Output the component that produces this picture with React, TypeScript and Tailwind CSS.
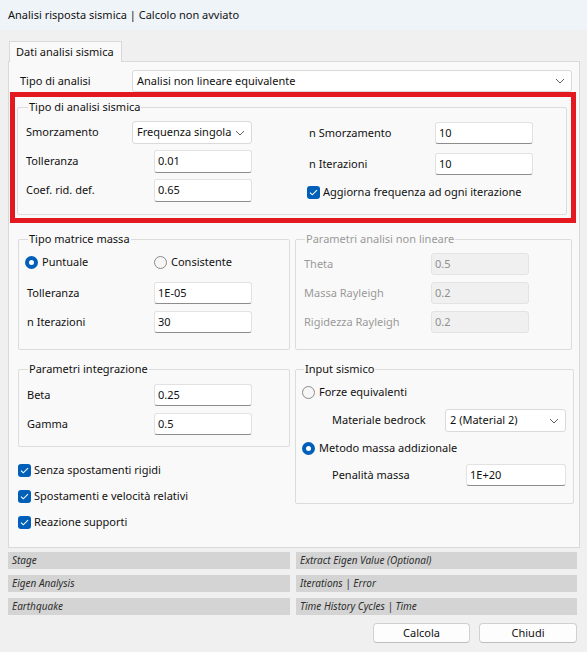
import React from "react";

const Chevron = () => (
  <svg width="10" height="6" viewBox="0 0 10 6" className="shrink-0">
    <path d="M1 1 L5 5 L9 1" fill="none" stroke="#5f5f5f" strokeWidth="1" />
  </svg>
);

const Check = () => (
  <span className="w-[13px] h-[13px] rounded-[3px] bg-[#005fb8] flex items-center justify-center shrink-0">
    <svg width="9" height="7" viewBox="0 0 9 7">
      <path d="M1 3.6 L3.3 5.8 L8 1.2" fill="none" stroke="#fff" strokeWidth="1.1" />
    </svg>
  </span>
);

const Radio: React.FC<{ on?: boolean }> = ({ on }) =>
  on ? (
    <span className="w-[13px] h-[13px] rounded-full bg-[#005fb8] flex items-center justify-center shrink-0">
      <span className="w-[5px] h-[5px] rounded-full bg-white" />
    </span>
  ) : (
    <span className="w-[13px] h-[13px] rounded-full border border-[#8a8a8a] bg-[#f6f6f6] shrink-0" />
  );

const Field: React.FC<{ value: string; w: string; h?: string; disabled?: boolean }> = ({
  value,
  w,
  h = "h-[22px]",
  disabled,
}) => (
  <div
    className={`${w} ${h} rounded-[3px] border pl-[3px] pt-[1px] leading-[18px] shrink-0 ${
      disabled
        ? "bg-[#f0f0f0] border-[#e3e3e3] text-[#8f8f8f]"
        : "bg-white border-[#e2e2e2] border-b-[#8d8d8d] text-[#111]"
    }`}
  >
    {value}
  </div>
);

const Combo: React.FC<{ value: string; w: string; h?: string }> = ({ value, w, h = "h-[23px]" }) => (
  <div
    className={`${w} ${h} rounded-[3px] border border-[#dadada] bg-white pl-[4px] pr-[6px] flex items-center justify-between gap-[4px] shrink-0`}
  >
    <span>{value}</span>
    <Chevron />
  </div>
);

const Group: React.FC<{ title: string; className?: string; disabled?: boolean; children: React.ReactNode }> = ({
  title,
  className = "",
  disabled,
  children,
}) => (
  <fieldset className={`border border-[#dcdcdc] rounded-[2px] px-[7px] ${className}`}>
    <legend className={`ml-[2px] px-[1px] leading-[16px] ${disabled ? "text-[#9a9a9a]" : ""}`}>{title}</legend>
    {children}
  </fieldset>
);

const Row: React.FC<{ label: string; lw: string; children: React.ReactNode; muted?: boolean }> = ({
  label,
  lw,
  children,
  muted,
}) => (
  <div className="flex items-center">
    <span className={`${lw} shrink-0 ${muted ? "text-[#9a9a9a]" : ""}`}>{label}</span>
    {children}
  </div>
);

const Status: React.FC<{ text: string }> = ({ text }) => (
  <div className="h-[17px] bg-[#d4d4d4] pl-[4px] text-[10px] italic leading-[17px] text-[#2e2e2e]">{text}</div>
);

export default function App() {
  return (
    <div
      className="w-[587px] h-[652px] bg-[#f0f0f0] text-[11px] text-[#111] overflow-hidden whitespace-nowrap"
      style={{ fontFamily: '"Noto Sans", "Open Sans", sans-serif' }}
    >
      <div className="h-[30px] bg-[#eff4f9] pl-[8px] flex items-center">Analisi risposta sismica | Calcolo non avviato</div>

      <div className="px-[8px] pt-[11px]">
        <div className="ml-[1px] w-[113px] h-[21px] border border-b-0 border-[#d9d9d9] bg-[#f9f9f9] pl-[6px] leading-[20px] relative z-10">
          Dati analisi sismica
        </div>

        <div className="-mt-px w-[572px] h-[487px] border border-[#d9d9d9] bg-[#f9f9f9] pt-[8px]">
          <div className="flex items-center pl-[11px]">
            <span className="w-[112px]">Tipo di analisi</span>
            <Combo value="Analisi non lineare equivalente" w="w-[440px]" h="h-[22px]" />
          </div>

          {/* highlighted block */}
          <div className="ml-px w-[566px] border-[5px] border-[#e3191f] pt-[2px] pl-[2px] pr-[4px] pb-[3px]">
            <Group title="Tipo di analisi sismica" className="pb-[12px] pl-[8px]">
              <div className="flex pt-[6px]">
                <div className="w-[283px] flex flex-col gap-[6px]">
                  <Row label="Smorzamento" lw="w-[106px]">
                    <Combo value="Frequenza singola" w="w-[120px]" />
                  </Row>
                  <Row label="Tolleranza" lw="w-[128px]">
                    <Field value="0.01" w="w-[98px]" h="h-[23px]" />
                  </Row>
                  <Row label="Coef. rid. def." lw="w-[128px]">
                    <Field value="0.65" w="w-[98px]" h="h-[23px]" />
                  </Row>
                </div>
                <div className="flex flex-col gap-[9px] pt-[1px]">
                  <Row label="n Smorzamento" lw="w-[126px]">
                    <Field value="10" w="w-[98px]" />
                  </Row>
                  <Row label="n Iterazioni" lw="w-[126px]">
                    <Field value="10" w="w-[98px]" />
                  </Row>
                  <div className="flex items-center gap-[3px] -ml-[2px] h-[16px]">
                    <Check />
                    <span>Aggiorna frequenza ad ogni iterazione</span>
                  </div>
                </div>
              </div>
            </Group>
          </div>

          <div className="flex gap-[5px] pl-[9px] pt-[8px] items-stretch">
            <Group title="Tipo matrice massa" className="w-[272px] pb-[16px]">
              <div className="flex items-center h-[16px] mt-[7px] -ml-[1px]">
                <span className="flex items-center gap-[4px] w-[129px]">
                  <Radio on />
                  Puntuale
                </span>
                <span className="flex items-center gap-[4px]">
                  <Radio />
                  Consistente
                </span>
              </div>
              <div className="flex flex-col gap-[7px] mt-[12px] ml-[1px]">
                <Row label="Tolleranza" lw="w-[127px]">
                  <Field value="1E-05" w="w-[98px]" />
                </Row>
                <Row label="n Iterazioni" lw="w-[127px]">
                  <Field value="30" w="w-[98px]" />
                </Row>
              </div>
            </Group>

            <Group title="Parametri analisi non lineare" className="w-[277px]" disabled>
              <div className="flex flex-col gap-[7px] mt-[6px] ml-[1px]">
                <Row label="Theta" lw="w-[127px]" muted>
                  <Field value="0.5" w="w-[98px]" disabled />
                </Row>
                <Row label="Massa Rayleigh" lw="w-[127px]" muted>
                  <Field value="0.2" w="w-[98px]" disabled />
                </Row>
                <Row label="Rigidezza Rayleigh" lw="w-[127px]" muted>
                  <Field value="0.2" w="w-[98px]" disabled />
                </Row>
              </div>
            </Group>
          </div>

          <div className="flex gap-[5px] pl-[9px] pt-[11px] items-start">
            <div className="w-[272px]">
              <Group title="Parametri integrazione" className="pb-[11px]">
                <div className="flex flex-col gap-[7px] mt-[7px] ml-[1px]">
                  <Row label="Beta" lw="w-[127px]">
                    <Field value="0.25" w="w-[98px]" />
                  </Row>
                  <Row label="Gamma" lw="w-[127px]">
                    <Field value="0.5" w="w-[98px]" />
                  </Row>
                </div>
              </Group>
              <div className="flex flex-col gap-[10px] mt-[15px]">
                {["Senza spostamenti rigidi", "Spostamenti e velocità relativi", "Reazione supporti"].map((t) => (
                  <div key={t} className="flex items-center gap-[3px] h-[16px]">
                    <Check />
                    <span>{t}</span>
                  </div>
                ))}
              </div>
            </div>

            <Group title="Input sismico" className="w-[277px] pb-[17px] pl-[6px]">
              <div className="flex items-center gap-[4px] h-[16px] mt-[7px]">
                <Radio />
                Forze equivalenti
              </div>
              <div className="flex items-center mt-[9px] pl-[30px]">
                <span className="w-[113px]">Materiale bedrock</span>
                <Combo value="2 (Material 2)" w="w-[121px]" />
              </div>
              <div className="flex items-center gap-[4px] h-[16px] mt-[8px]">
                <Radio on />
                Metodo massa addizionale
              </div>
              <div className="flex items-center mt-[8px] pl-[30px]">
                <span className="w-[134px]">Penalità massa</span>
                <Field value="1E+20" w="w-[100px]" />
              </div>
            </Group>
          </div>
        </div>

        <div className="grid grid-cols-[282px_281px] gap-x-[6px] gap-y-[6px] mt-[4px]">
          <Status text="Stage" />
          <Status text="Extract Eigen Value (Optional)" />
          <Status text="Eigen Analysis" />
          <Status text="Iterations | Error" />
          <Status text="Earthquake" />
          <Status text="Time History Cycles | Time" />
        </div>

        <div className="flex justify-end gap-[9px] mt-[8px] pr-[2px]">
          <button className="w-[97px] h-[20px] rounded-[4px] border border-[#d0d0d0] border-b-[#bdbdbd] bg-[#fdfdfd] leading-[18px]">
            Calcola
          </button>
          <button className="w-[98px] h-[20px] rounded-[4px] border border-[#d0d0d0] border-b-[#bdbdbd] bg-[#fdfdfd] leading-[18px]">
            Chiudi
          </button>
        </div>
      </div>
    </div>
  );
}
